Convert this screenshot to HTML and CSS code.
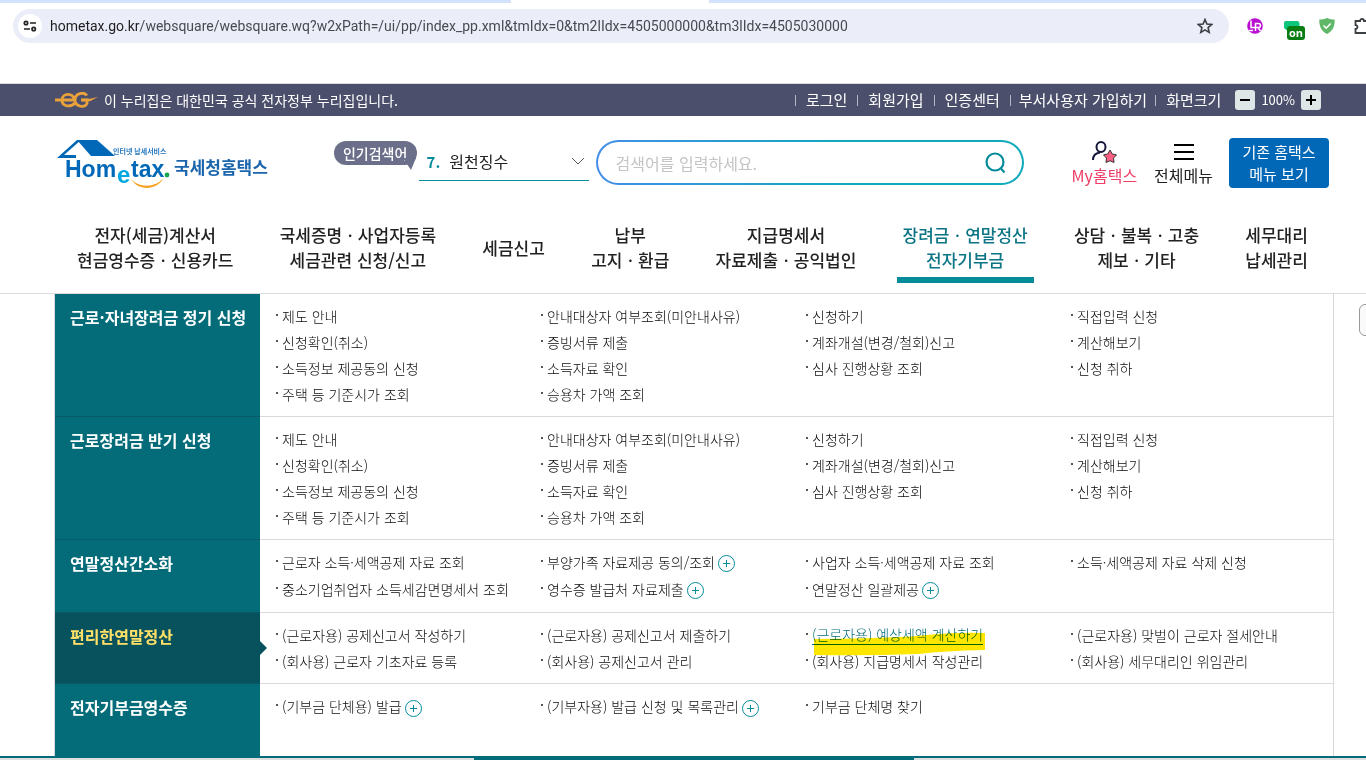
FILE: index.html
```html
<!DOCTYPE html>
<html lang="ko">
<head>
<meta charset="utf-8">
<title>국세청 홈택스</title>
<link rel="stylesheet" href="styles.css">
</head>
<body>
<div class="browser">
  <div class="tabstrip"><span class="tab-foot"></span></div>
  <div class="toolbar">
    <div class="address">
      <button class="site-info" aria-label="사이트 정보">
        <svg width="14" height="12" viewBox="0 0 14 12" fill="none" stroke="#222" stroke-width="1.700"><circle cx="3" cy="3" r="1.700"/><path d="M7 3H13M1 9h6"/><circle cx="10.700" cy="9" r="1.700"/></svg>
      </button>
      <span class="url"><b>hometax.go.kr</b>/websquare/websquare.wq?w2xPath=/ui/pp/index_pp.xml&amp;tmIdx=0&amp;tm2lIdx=4505000000&amp;tm3lIdx=4505030000</span>
      <button class="star" aria-label="북마크">
        <svg width="16" height="16" viewBox="0 0 16 16" fill="none" stroke="#3c4043" stroke-width="1.600"><path d="M8 1.500l1.900 4.500 4.900.4-3.700 3.200 1.100 4.800L8 11.900l-4.200 2.500 1.100-4.800L1.200 6.400l4.900-.4z"/></svg>
      </button>
    </div>
    <div class="extensions">
      <svg width="16" height="16" viewBox="0 0 16 16"><circle cx="8" cy="8" r="7.800" fill="#b80fd0"/><path d="M4 2.500v7h4.500M8.500 13V5.500h3a2 2 0 010 4h-3M11 9.500l2.500 3.500M2 12.500h4" fill="none" stroke="#fff" stroke-width="1.500"/></svg>
      <span class="ext-on"><svg width="18" height="16" viewBox="0 0 18 16"><path d="M3 1h11a2.500 2.500 0 012.500 2.500V12H6L1 8V3a2 2 0 012-2z" fill="#0bc67c"/></svg><span class="on-badge">on</span></span>
      <svg width="16" height="16" viewBox="0 0 16 16"><path d="M8 0c2.500 1 5 1.500 7.700 1.500C16 9 13 13.500 8 16 3 13.500 0 9 .3 1.500 3 1.500 5.500 1 8 0z" fill="#5fb767"/><path d="M4.500 7.500l2.700 2.700 4.500-4.700" fill="none" stroke="#fff" stroke-width="1.600"/></svg>
      <svg width="16" height="18" viewBox="0 0 16 18"><path d="M1.500 4H6a2 2 0 014 0h5v12H1.500v-4a2 2 0 000-4z" fill="none" stroke="#3c4043" stroke-width="1.800"/></svg>
    </div>
  </div>
</div>

<div class="gov-bar">
  <div class="gov-note">
    <svg width="44" height="16" viewBox="0 0 44 16" fill="none" stroke="#e9a13b" stroke-width="2.800"><path d="M1 8h20M20 7.500c0-7-12-7-12 .5 0 7 9 7.500 13 3M33 3.500C30-.500 21 1 21 8s10 8 12 3.500V8h-6"/><path d="M28 6.700h8l8-1.700-8 4.300h-8z" fill="#e9a13b" stroke="none"/></svg>
    <span>이 누리집은 대한민국 공식 전자정부 누리집입니다.</span>
  </div>
  <ul class="util">
    <li><a href="#">로그인</a></li>
    <li><a href="#">회원가입</a></li>
    <li><a href="#">인증센터</a></li>
    <li class="tight"><a href="#">부서사용자 가입하기</a></li>
    <li>화면크기</li>
  </ul>
  <div class="zoomer">
    <button aria-label="축소"><svg width="10" height="10" viewBox="0 0 10 10"><path d="M0 5h10" stroke="#000" stroke-width="2"/></svg></button>
    <span>100%</span>
    <button aria-label="확대"><svg width="10" height="10" viewBox="0 0 10 10"><path d="M0 5h10M5 0v10" stroke="#000" stroke-width="2"/></svg></button>
  </div>
</div>

<header class="header">
  <div class="masthead">
    <a class="logo" href="#" aria-label="국세청홈택스">
      <svg width="212" height="50" viewBox="0 0 212 50">
        <path d="M20 1h20l18 16H34z" fill="#0068b7"/>
        <path d="M20 1h4L7 16h12v3H0z" fill="#0068b7"/>
        <text class="logo-word" x="8" y="38">Hom</text>
        <text class="logo-e" x="60" y="44">e</text>
        <text class="logo-word" x="74" y="38">tax</text>
        <circle cx="110" cy="36" r="2.400" fill="#16a651"/>
        <path d="M74 40c8 9 24 9 33-1-8 13-26 13-33 1z" fill="#f5a11c"/>
        <text class="logo-tag" x="56" y="15">인터넷 납세서비스</text>
        <text class="logo-name" x="117" y="35">국세청홈택스</text>
      </svg>
    </a>
    <div class="popular">
      <label class="pop-label" for="pop">인기검색어</label>
      <div class="pop-select">
        <span class="rank">7.</span>
        <select id="pop"><option>원천징수</option></select>
      </div>
    </div>
    <form class="search">
      <input type="text" placeholder="검색어를 입력하세요." aria-label="검색어">
      <button type="button" aria-label="검색"><svg width="24" height="24" viewBox="0 0 24 24" fill="none" stroke="#048c9a" stroke-width="2.200"><circle cx="11" cy="11" r="8.500"/><path d="M16.500 17l4 4.500"/></svg></button>
    </form>
    <div class="quick">
      <a class="my" href="#">
        <svg width="28" height="24" viewBox="0 0 28 24"><g fill="none" stroke="#16163c" stroke-width="2"><ellipse cx="11" cy="7" rx="4.500" ry="5"/><path d="M3 20c0-5 3-7 7-7.500"/></g><path d="M20 10l2.200 4 4.300.9-3 3.200.5 4.400-4-1.800-4 1.800.5-4.400-3-3.200 4.300-.9z" fill="#ff5f83" stroke="#333" stroke-width="1"/></svg>
        <span>My홈택스</span>
      </a>
      <a class="all" href="#">
        <svg width="20" height="24" viewBox="0 0 20 24"><path d="M0 5h20M0 12h20M0 19h20" stroke="#000" stroke-width="2"/></svg>
        <span>전체메뉴</span>
      </a>
    </div>
    <button class="old-menu">기존 홈택스<br>메뉴 보기</button>
  </div>
  <nav class="gnb">
    <a href="#">전자(세금)계산서<br>현금영수증ㆍ신용카드</a>
    <a href="#">국세증명ㆍ사업자등록<br>세금관련 신청/신고</a>
    <a href="#">세금신고</a>
    <a href="#">납부<br>고지ㆍ환급</a>
    <a href="#">지급명세서<br>자료제출ㆍ공익법인</a>
    <a class="current" href="#">장려금ㆍ연말정산<br>전자기부금</a>
    <a href="#">상담ㆍ불복ㆍ고충<br>제보ㆍ기타</a>
    <a href="#">세무대리<br>납세관리</a>
  </nav>
</header>

<main class="mega">
  <section class="row">
    <h2>근로·자녀장려금 정기 신청</h2>
    <div class="cols">
      <ul><li><a href="#">제도 안내</a></li><li><a href="#">신청확인(취소)</a></li><li><a href="#">소득정보 제공동의 신청</a></li><li><a href="#">주택 등 기준시가 조회</a></li></ul>
      <ul><li><a href="#">안내대상자 여부조회(미안내사유)</a></li><li><a href="#">증빙서류 제출</a></li><li><a href="#">소득자료 확인</a></li><li><a href="#">승용차 가액 조회</a></li></ul>
      <ul><li><a href="#">신청하기</a></li><li><a href="#">계좌개설(변경/철회)신고</a></li><li><a href="#">심사 진행상황 조회</a></li></ul>
      <ul><li><a href="#">직접입력 신청</a></li><li><a href="#">계산해보기</a></li><li><a href="#">신청 취하</a></li></ul>
    </div>
  </section>
  <section class="row">
    <h2>근로장려금 반기 신청</h2>
    <div class="cols">
      <ul><li><a href="#">제도 안내</a></li><li><a href="#">신청확인(취소)</a></li><li><a href="#">소득정보 제공동의 신청</a></li><li><a href="#">주택 등 기준시가 조회</a></li></ul>
      <ul><li><a href="#">안내대상자 여부조회(미안내사유)</a></li><li><a href="#">증빙서류 제출</a></li><li><a href="#">소득자료 확인</a></li><li><a href="#">승용차 가액 조회</a></li></ul>
      <ul><li><a href="#">신청하기</a></li><li><a href="#">계좌개설(변경/철회)신고</a></li><li><a href="#">심사 진행상황 조회</a></li></ul>
      <ul><li><a href="#">직접입력 신청</a></li><li><a href="#">계산해보기</a></li><li><a href="#">신청 취하</a></li></ul>
    </div>
  </section>
  <section class="row roomy">
    <h2>연말정산간소화</h2>
    <div class="cols">
      <ul><li><a href="#">근로자 소득·세액공제 자료 조회</a></li><li><a href="#">중소기업취업자 소득세감면명세서 조회</a></li></ul>
      <ul><li><a href="#">부양가족 자료제공 동의/조회</a><button class="more" aria-label="펼치기"></button></li><li><a href="#">영수증 발급처 자료제출</a><button class="more" aria-label="펼치기"></button></li></ul>
      <ul><li><a href="#">사업자 소득·세액공제 자료 조회</a></li><li><a href="#">연말정산 일괄제공</a><button class="more" aria-label="펼치기"></button></li></ul>
      <ul><li><a href="#">소득·세액공제 자료 삭제 신청</a></li></ul>
    </div>
  </section>
  <section class="row selected">
    <h2>편리한연말정산</h2>
    <div class="cols">
      <ul><li><a href="#">(근로자용) 공제신고서 작성하기</a></li><li><a href="#">(회사용) 근로자 기초자료 등록</a></li></ul>
      <ul><li><a href="#">(근로자용) 공제신고서 제출하기</a></li><li><a href="#">(회사용) 공제신고서 관리</a></li></ul>
      <ul><li><a class="hover" href="#">(근로자용) 예상세액 계산하기<svg class="marker" viewBox="0 0 171 24" preserveAspectRatio="none"><path d="M0 7Q90 6 112 3Q145 0 171 1V18Q130 19 105 22Q50 24 0 23z" fill="#ffe600"/></svg></a></li><li><a href="#">(회사용) 지급명세서 작성관리</a></li></ul>
      <ul><li><a href="#">(근로자용) 맞벌이 근로자 절세안내</a></li><li><a href="#">(회사용) 세무대리인 위임관리</a></li></ul>
    </div>
  </section>
  <section class="row last">
    <h2>전자기부금영수증</h2>
    <div class="cols">
      <ul><li><a href="#">(기부금 단체용) 발급</a><button class="more" aria-label="펼치기"></button></li></ul>
      <ul><li><a href="#">(기부자용) 발급 신청 및 목록관리</a><button class="more" aria-label="펼치기"></button></li></ul>
      <ul><li><a href="#">기부금 단체명 찾기</a></li></ul>
      <ul></ul>
    </div>
  </section>
</main>
<div class="page-foot"><span></span></div>
<button class="side-tab" aria-label="퀵메뉴"></button>
</body>
</html>
```

FILE: styles.css
```css
* { box-sizing: border-box; }
body {
  margin: 0;
  position: relative;
  min-height: 100vh;
  overflow: hidden;
  background: #fff;
  color: #222;
  font-family: "Noto Sans CJK KR", sans-serif;
  font-size: 14px;
}
a { color: inherit; text-decoration: none; }
ul { list-style: none; margin: 0; padding: 0; }
button { border: 0; padding: 0; background: none; font: inherit; color: inherit; cursor: pointer; }
svg { display: block; flex: none; }

/* browser toolbar */
.browser { height: 84px; border-bottom: 1px solid #dcdcdc; }
.tabstrip { height: 3px; background: #d3e3fd; display: flex; justify-content: center; }
.tab-foot { width: 198px; margin-right: 146px; background: #fff; }
.toolbar { display: flex; align-items: center; padding: 6px 0 0 13px; }
.address {
  flex: 1;
  display: flex;
  align-items: center;
  height: 34px;
  padding: 0 16px 0 5px;
  border-radius: 17px;
  background: #ebeef8;
}
.site-info {
  display: grid;
  place-items: center;
  width: 24px;
  height: 24px;
  border-radius: 50%;
  background: #fff;
}
.url { flex: 1; margin-left: 8px; font-family: Roboto, sans-serif; font-size: 14px; color: #474a50; white-space: nowrap; }
.url b { font-weight: 400; color: #1f1f1f; }
.extensions { display: flex; align-items: center; width: 137px; padding-left: 18px; gap: 20px; overflow: hidden; }
.ext-on { flex: none; position: relative; width: 36px; height: 28px; padding-top: 8px; }
.ext-on + svg { margin-left: -20px; }
.extensions > svg:last-child { margin-left: -1px; }
.on-badge {
  position: absolute;
  left: 4px;
  top: 14px;
  width: 18px;
  height: 14px;
  border-radius: 3px;
  background: #0a7d12;
  color: #fff;
  font: 700 11px/13px "Open Sans", sans-serif;
  text-align: center;
}

/* government notice bar */
.gov-bar {
  display: flex;
  align-items: center;
  height: 32px;
  padding: 0 45px 0 54px;
  background: #4b4f6b;
  color: #fff;
  font-size: 15px;
  line-height: 20px;
}
.gov-note { display: flex; align-items: center; gap: 6px; margin-right: auto; font-size: 14px; }
.util { display: flex; }
.util li { display: flex; align-items: center; padding-right: 10px; }
.util li::before { content: ""; width: 1px; height: 11px; margin-right: 10px; background: #b5b7c4; }
.util .tight::before { margin-right: 8px; }
.util .tight { padding-right: 8px; }
.zoomer { display: flex; align-items: center; gap: 6px; margin-left: 4px; font-size: 13px; }
.zoomer button { display: grid; place-items: center; width: 20px; height: 20px; border-radius: 3px; background: #dee6e8; }

/* header */
.header { border-bottom: 1px solid #dcdcdc; }
.masthead { display: flex; align-items: flex-start; padding: 22px 37px 0 57px; }
.logo { padding-top: 1px; }
.logo-word { font: 700 23px "Liberation Sans", sans-serif; fill: #0068b7; }
.logo-e { font: 700 24px "Liberation Sans", sans-serif; fill: #00a7e0; }
.logo-tag { font: 700 7px "Noto Sans CJK KR", sans-serif; fill: #2a7abf; }
.logo-name { font: 700 17px "Noto Sans CJK KR", sans-serif; fill: #1b65ad; }
.popular { display: flex; align-items: flex-start; gap: 2px; margin-left: auto; }
.pop-label {
  position: relative;
  width: 83px;
  margin-top: 3px;
  border-radius: 12px;
  background: #6b6f8a;
  color: #fff;
  font-size: 14px;
  font-weight: 500;
  line-height: 24px;
  text-align: center;
}
.pop-label::after {
  content: "";
  position: absolute;
  right: 1px;
  bottom: -5px;
  border: solid transparent;
  border-width: 12px 5px 0 8px;
  border-top-color: #6b6f8a;
}
.pop-select {
  display: flex;
  align-items: center;
  width: 170px;
  height: 43px;
  padding: 4px 0 0 8px;
  border-bottom: 1px solid #048c9a;
  font-size: 16px;
}
.rank { font-size: 15px; font-weight: 700; color: #048c9a; }
.pop-select select {
  flex: 1;
  margin-left: 9px;
  border: 0;
  appearance: none;
  background: url("data:image/svg+xml,%3Csvg xmlns='http://www.w3.org/2000/svg' width='12' height='8'%3E%3Cpath d='M0 1l6 6 6-6' fill='none' stroke='%23555'/%3E%3C/svg%3E") no-repeat right 5px center;
  font: inherit;
  color: #222;
}
.search {
  display: flex;
  align-items: center;
  flex: 0 1 428px;
  height: 45px;
  margin: 2px 0 0 7px;
  padding: 0 14px 0 16px;
  border: 2px solid transparent;
  border-radius: 23px;
  background: linear-gradient(#fff, #fff) padding-box, linear-gradient(90deg, #438ee8, #0faabb 60%) border-box;
}
.search input { flex: 1; min-width: 0; border: 0; outline: 0; background: none; font: inherit; font-size: 16px; }
.search input::placeholder { color: #c4c4c4; }
.quick { display: flex; gap: 17px; margin: 2px 16px 0 48px; font-size: 16px; line-height: 22px; }
.quick a { display: flex; flex-direction: column; align-items: center; }
.my { color: #ee3d66; }
.old-menu { width: 100px; height: 50px; border-radius: 4px; background: #0068b7; color: #fff; font-size: 15px; line-height: 22px; }

.gnb {
  display: flex;
  justify-content: space-between;
  align-items: center;
  padding: 33px 52px 10px 71px;
  font-size: 17px;
  font-weight: 500;
  line-height: 25px;
  text-align: center;
  white-space: nowrap;
}
.gnb a { padding: 0 6px 5px; border-bottom: 6px solid transparent; }
.gnb .current { color: #0b7585; border-color: #048c9a; }

/* mega menu */
.mega { margin: 0 32px 0 54px; border: solid #d8d8d8; border-width: 0 1px; }
.row { display: flex; }
.row h2 {
  flex: 0 0 205px;
  margin: 0;
  padding: 11px 0 0 15px;
  background: #046c79;
  border-bottom: 1px solid #085a66;
  color: #fff;
  font-size: 16px;
  font-weight: 700;
  line-height: 24px;
  white-space: nowrap;
}
.cols {
  flex: 1;
  display: grid;
  grid-template-columns: repeat(3, 265fr) 262fr;
  padding: 9px 0 9px 16px;
  border-bottom: 1px solid #dadada;
  color: #0c0c0c;
  font-weight: 300;
}
.cols ul { min-width: 0; }
.cols li { display: flex; align-items: center; height: 26px; white-space: nowrap; }
.cols li::before { content: ""; width: 2px; height: 2px; margin: 0 4px 2px 0; background: #555; }
.roomy .cols { padding: 8px 0 10px 16px; }
.roomy li { height: 27px; }
.more { width: 17px; height: 17px; margin: 4px 0 0 3px; border: 1px solid #048c9a; border-radius: 50%; background: linear-gradient(#048c9a, #048c9a) center / 7px 1px no-repeat, linear-gradient(#048c9a, #048c9a) center / 1px 7px no-repeat; }
.selected h2 { position: relative; background: #07525c; color: #ffe168; }
.selected h2::after {
  content: "";
  position: absolute;
  left: 100%;
  top: 50%;
  margin-top: -7px;
  border: solid transparent;
  border-width: 7px 0 7px 7px;
  border-left-color: #07525c;
}
.hover { position: relative; border-bottom: 1px solid #046c79; color: #046c79; line-height: 19px; }
.marker { position: absolute; left: 2px; top: 7px; width: 100%; height: 24px; mix-blend-mode: multiply; }
.last h2, .last .cols { border-bottom: 0; }
.last .cols { padding-bottom: 37px; }
.page-foot { height: 4px; padding-top: 2px; background: linear-gradient(#046c79, #046c79) top / 100% 2px no-repeat #dedede; }
.page-foot span { display: block; width: 440px; height: 2px; margin: 0 auto; background: #046c79; position: relative; left: 11px; }
.side-tab { position: absolute; right: -8px; top: 304px; width: 15px; height: 32px; border: 1px solid #999; border-radius: 6px; background: #fafafa; }
```
